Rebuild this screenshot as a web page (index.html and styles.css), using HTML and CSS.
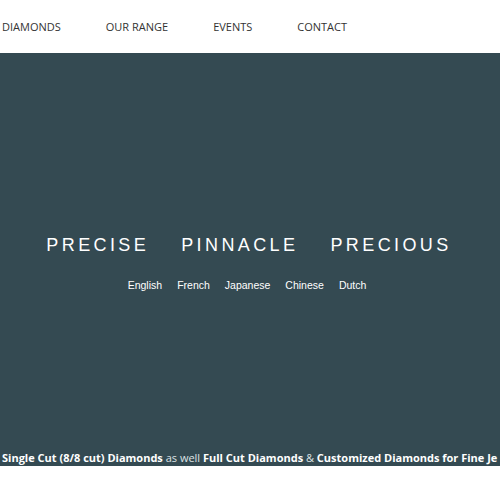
FILE: index.html
```html
<!DOCTYPE html>
<html lang="en">

<head>
    <meta charset="UTF-8">
    <meta name="viewport" content="width=device-width, initial-scale=1.0">
    <title>Diamonds</title>
    <link rel="stylesheet" href="styles.css">
</head>

<body>

    <nav class="top-nav">
        <a href="#">DIAMONDS</a>
        <a href="#">OUR RANGE</a>
        <a href="#">EVENTS</a>
        <a href="#">CONTACT</a>
    </nav>

    <section class="hero">
        <div class="hero-body">
            <h1 class="tagline">
                <span>PRECISE</span>
                <span>PINNACLE</span>
                <span>PRECIOUS</span>
            </h1>
            <div class="languages">
                <a href="#">English</a>
                <a href="#">French</a>
                <a href="#">Japanese</a>
                <a href="#">Chinese</a>
                <a href="#">Dutch</a>
            </div>
        </div>
        <p class="range-line">
            <strong>Single Cut (8/8 cut) Diamonds</strong> as well <strong>Full Cut Diamonds</strong> &amp; <strong>Customized Diamonds for Fine Je</strong>
        </p>
    </section>

</body>

</html>
```

FILE: styles.css
```css
/* Page */
body {
    margin: 0;
    font-family: "Open Sans", Arial, sans-serif;
    background-color: #fff;
    overflow: hidden;
}

/* Top navigation */
.top-nav {
    height: 52px;
    display: flex;
    align-items: center;
    gap: 45px;
    padding-left: 2px;
    padding-bottom: 1px;
    white-space: nowrap;
}

.top-nav a {
    color: #333;
    text-decoration: none;
    font-size: 11px;
}

/* Hero */
.hero {
    background-color: #344a52;
    height: 413px;
    display: flex;
    flex-direction: column;
    color: #fff;
}

.hero-body {
    flex: 1;
    display: flex;
    flex-direction: column;
    align-items: center;
    justify-content: center;
    padding-top: 22px;
}

.tagline {
    margin: 0 0 0 -2px;
    display: flex;
    gap: 32px;
    font-family: "Liberation Sans", Arial, sans-serif;
    font-weight: normal;
    font-size: 18px;
    letter-spacing: 3.4px;
}

.languages {
    display: flex;
    gap: 15px;
    margin: 23px 0 0 -6px;
}

.languages a {
    color: #fff;
    text-decoration: none;
    font-family: "Liberation Sans", Arial, sans-serif;
    font-size: 10.5px;
}

.range-line {
    margin: 0 0 1px;
    padding-left: 2px;
    font-size: 11px;
    white-space: nowrap;
    overflow: hidden;
    color: #dde3e5;
}

.range-line strong {
    color: #fff;
}
```
